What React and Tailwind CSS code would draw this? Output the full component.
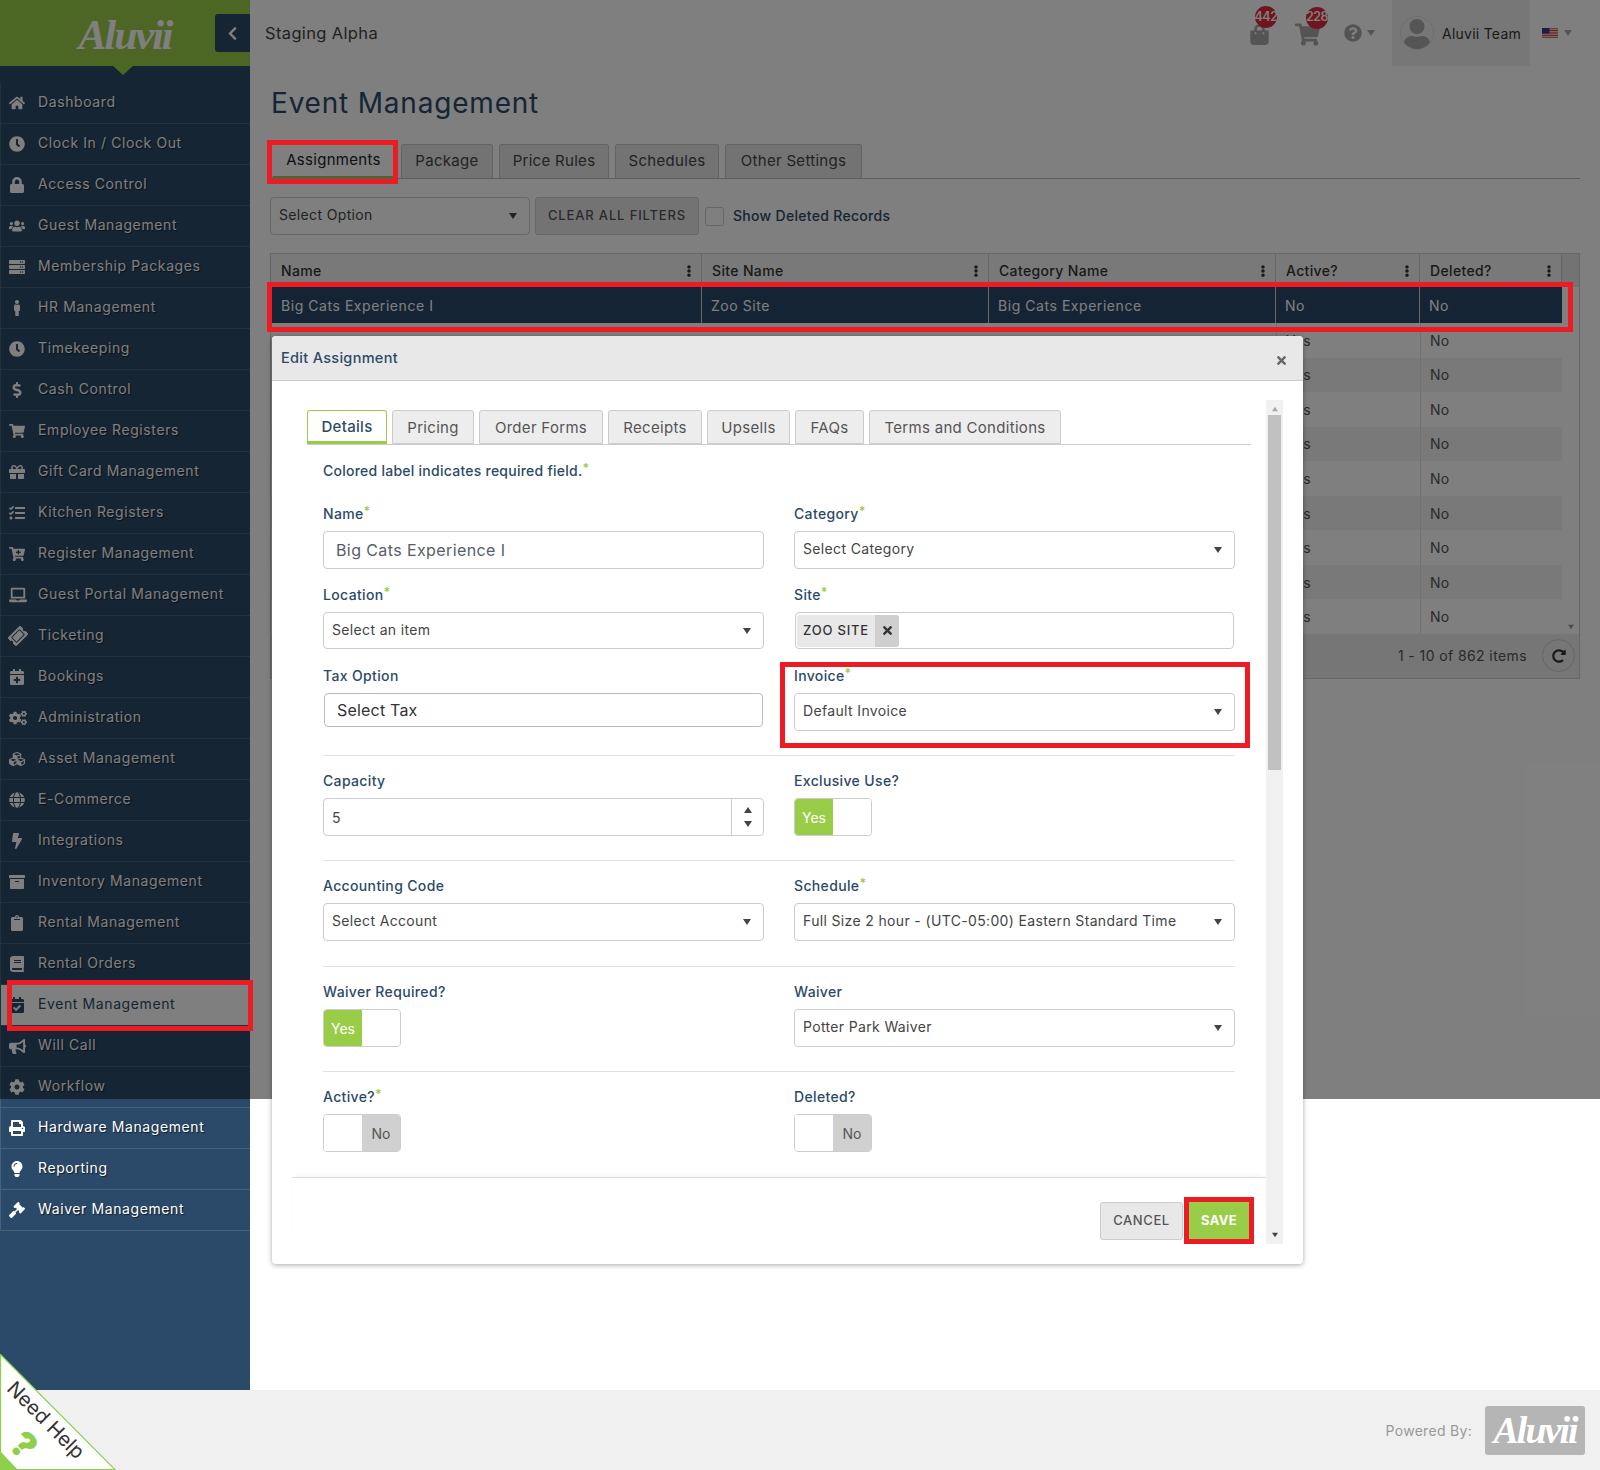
import React from "react";
import {
  FaHome, FaClock, FaLock, FaUsers, FaServer, FaMale, FaDollarSign, FaShoppingCart, FaGift, FaTasks,
  FaCartPlus, FaLaptop, FaTicketAlt, FaCalendarPlus, FaCogs, FaCubes, FaGlobe, FaBolt, FaArchive, FaClipboard,
  FaBook, FaCalendarCheck, FaBullhorn, FaCog, FaPrint, FaLightbulb, FaGavel, FaChevronLeft, FaShoppingBag,
  FaQuestionCircle, FaUser, FaTimes, FaEllipsisV, FaRedoAlt,
} from "react-icons/fa";

const nav = [
  [FaHome, "Dashboard"], [FaClock, "Clock In / Clock Out"], [FaLock, "Access Control"], [FaUsers, "Guest Management"],
  [FaServer, "Membership Packages"], [FaMale, "HR Management"], [FaClock, "Timekeeping"], [FaDollarSign, "Cash Control"],
  [FaShoppingCart, "Employee Registers"], [FaGift, "Gift Card Management"], [FaTasks, "Kitchen Registers"],
  [FaCartPlus, "Register Management"], [FaLaptop, "Guest Portal Management", 18], [FaTicketAlt, "Ticketing", 18, "-rotate-45"],
  [FaCalendarPlus, "Bookings"], [FaCogs, "Administration", 18], [FaCubes, "Asset Management"], [FaGlobe, "E-Commerce"],
  [FaBolt, "Integrations"], [FaArchive, "Inventory Management"], [FaClipboard, "Rental Management"], [FaBook, "Rental Orders"],
  [FaCalendarCheck, "Event Management"], [FaBullhorn, "Will Call", 17], [FaCog, "Workflow"], [FaPrint, "Hardware Management"],
  [FaLightbulb, "Reporting"], [FaGavel, "Waiver Management"],
];

function NavItem({ icon: Icon, label, size = 16, iconClass = "" }) {
  const active = label === "Event Management";
  return (
    <div className={`flex h-[41px] items-center border-b border-l border-[#46617c] pl-[8px] text-[14px] tracking-[0.6px] ${active ? "bg-white text-[#2c4a68]" : "text-white [text-shadow:1px_1px_1px_rgba(0,0,0,0.6)]"}`}>
      <span className="flex w-[29px] shrink-0 items-center"><Icon size={size} className={iconClass} /></span>
      <span className="-mt-[3px]">{label}</span>
    </div>
  );
}

const Caret = ({ className = "" }) => (
  <span className={`inline-block h-0 w-0 border-x-[4px] border-t-[6px] border-x-transparent border-t-[#444] ${className}`} />
);

function Flag() {
  return (
    <svg width="16" height="11" viewBox="0 0 16 11">
      <rect width="16" height="11" fill="#fff" />
      <path d="M0 .8h16M0 2.5h16M0 4.2h16M0 5.9h16M0 7.6h16M0 9.3h16" stroke="#c8352f" strokeWidth="0.9" />
      <rect width="7.5" height="5.6" fill="#3c3b8f" />
    </svg>
  );
}

function Badge({ n, className }) {
  return (
    <span className={`absolute flex h-[22px] w-[22px] items-center justify-center rounded-full bg-[#e0283c] text-[12.5px] font-semibold tracking-[-0.5px] text-white ${className}`}>{n}</span>
  );
}

function Label({ children, req }) {
  return (
    <div className="flex h-[34px] items-center pb-[1px] text-[14px] font-medium tracking-[0.35px] text-[#2c4a68]">
      {children}
      {req && <span className="relative -top-[3px] text-[12px] font-bold text-[#9acd47]">*</span>}
    </div>
  );
}

function Select({ value, className = "h-[37px]" }) {
  return (
    <div className={`flex items-center justify-between rounded-[4px] border border-[#ccc] bg-white pl-[8px] pr-[12px] text-[14px] tracking-[0.35px] text-[#444] ${className}`}>
      <span className="pb-[3px]">{value}</span>
      <Caret />
    </div>
  );
}

function Toggle({ on }) {
  return (
    <div className="flex h-[38px] w-[78px] overflow-hidden rounded-[4px] border border-[#ccc] text-[14px]">
      {on ? (
        <>
          <span className="flex w-[38px] items-center justify-center bg-[#9acd47] text-white">Yes</span>
          <span className="flex-1 bg-white" />
        </>
      ) : (
        <>
          <span className="w-[38px] bg-white" />
          <span className="flex flex-1 items-center justify-center bg-[#d0d0d0] text-[#555]">No</span>
        </>
      )}
    </div>
  );
}

const Divider = ({ className = "" }) => <div className={`border-t border-[#e2e2e2] ${className}`} />;

const Red = ({ className }) => <div className={`absolute border-[5px] border-[#ed1c24] ${className}`} />;

function MainTab({ children, active, className }) {
  return (
    <div className={`flex h-[34px] items-center justify-center rounded-t-[3px] border border-b-0 text-[15px] tracking-[0.3px] ${active ? "border-transparent border-b-[2px] border-b-[#99cc46] text-[#222]" : "border-[#c6c6c6] bg-[#e8e7e8] text-[#444]"} ${className}`}>
      {children}
    </div>
  );
}

function ModalTab({ children, active, className }) {
  return (
    <div className={`flex h-[34px] items-center justify-center rounded-t-[3px] border pt-[2px] text-[15px] tracking-[0.3px] ${active ? "border-[#9acd47] border-b-[3px] bg-white font-medium text-[#2c4a68]" : "border-[#ccc] bg-[#eeeded] text-[#555]"} ${className}`}>
      {children}
    </div>
  );
}

const HeadCell = ({ children }) => (
  <div className="flex items-center justify-between border-r border-[#c8c8c8] pl-[10px] pr-[6px] text-[14px] font-medium tracking-[0.35px] text-[#333]">
    <span>{children}</span>
    <FaEllipsisV size={12} className="text-[#333]" />
  </div>
);

const SelCell = ({ children, last }) => (
  <div className={`flex items-center bg-[#294869] pl-[9px] text-[14px] tracking-[0.55px] text-white ${last ? "" : "border-r border-[#d0d0d0]"}`}>{children}</div>
);

function BgRow({ stripe, last }) {
  return (
    <div className={`grid h-[34.56px] grid-cols-[431px_287px_287px_144px_142px_1fr] text-[14px] tracking-[0.3px] text-[#555] ${stripe ? "[&>div:not(:last-child)]:bg-[#f2f2f2]" : ""}`}>
      <div /><div /><div />
      <div className="flex items-center border-l border-[#e2e2e2] pl-[9px]">Yes</div>
      <div className="flex items-center border-l border-[#e2e2e2] pl-[9px]">No</div>
      <div className="flex items-end justify-center pb-[4px]">{last && <Caret className="scale-75 border-t-[#999]" />}</div>
    </div>
  );
}

export default function App() {
  return (
    <div className="relative h-[1470px] w-[1600px] overflow-hidden bg-white font-[Inter,sans-serif] text-[#333]">
      <div className="flex h-[1390px]">
        <aside className="w-[250px] shrink-0 bg-[#2b4a69]">
          <div className="relative flex h-[66px] items-center bg-[#99cc46]">
            <div className="ml-[70px] flex h-[53px] w-[110px] items-center justify-center bg-white/[0.03] pt-[4px] font-['Liberation_Serif',serif] text-[42px] font-bold italic leading-none tracking-[-2px] text-white">Aluvii</div>
            <div className="absolute right-0 top-[14px] flex h-[38px] w-[35px] items-center justify-center rounded-l-[3px] bg-[#2b4a69] text-white"><FaChevronLeft size={15} /></div>
            <span className="absolute left-[113px] top-full h-0 w-0 border-x-[10px] border-t-[9px] border-x-transparent border-t-[#99cc46]" />
          </div>
          <nav className="pt-[17px]">
            {nav.map(([icon, label, size, iconClass]) => <NavItem key={label} icon={icon} label={label} size={size} iconClass={iconClass} />)}
          </nav>
        </aside>

        <main className="w-[1350px]">
          <header className="flex h-[66px] items-center justify-between text-[#444]">
            <div className="pl-[15px] text-[16.5px] tracking-[0.35px]">Staging Alpha</div>
            <div className="flex h-full items-center">
              <div className="relative mr-[25px] text-[#a8a8a8]"><FaShoppingBag size={21} className="mt-[3px]" /><Badge n="442" className="-right-[7px] -top-[15px]" /></div>
              <div className="relative mr-[24px] text-[#a8a8a8]"><FaShoppingCart size={25} className="mt-[2px]" /><Badge n="228" className="-right-[8px] -top-[13px]" /></div>
              <div className="mr-[17px] flex items-center gap-[5px] text-[#a8a8a8]"><FaQuestionCircle size={18} /><Caret className="border-t-[#aaa]" /></div>
              <div className="flex h-full w-[138px] items-center bg-[#efefef] pl-[8px] text-[14px] tracking-[0.25px] text-[#333]">
                <span className="mr-[8px] flex h-[34px] w-[34px] items-end justify-center overflow-hidden rounded-full border border-[#ddd] text-[#aaa]"><FaUser size={30} /></span>
                Aluvii Team
              </div>
              <div className="ml-[12px] mr-[28px] flex items-center gap-[6px]"><Flag /><Caret className="border-t-[#aaa]" /></div>
            </div>
          </header>

          <div className="px-[20px]">
            <h1 className="flex h-[78px] items-center pb-[5px] pl-px text-[28px] font-normal tracking-[0.8px] text-[#2c4a68]">Event Management</h1>
            <div className="flex gap-[6px] border-b border-[#bbb] pl-[2px]">
              <MainTab active className="w-[123px]">Assignments</MainTab>
              <MainTab className="w-[92px]">Package</MainTab>
              <MainTab className="w-[110px]">Price Rules</MainTab>
              <MainTab className="w-[104px]">Schedules</MainTab>
              <MainTab className="w-[137px]">Other Settings</MainTab>
            </div>

            <div className="mt-[18px] flex h-[38px] items-center">
              <Select value="Select Option" className="h-[38px] w-[260px]" />
              <div className="ml-[5px] flex h-[38px] w-[164px] items-center justify-center rounded-[3px] border border-[#ccc] bg-[#e8e7e8] text-[13px] font-medium tracking-[0.85px] text-[#555]">CLEAR ALL FILTERS</div>
              <div className="ml-[6px] h-[19px] w-[19px] rounded-[3px] border border-[#ccc] bg-white" />
              <div className="ml-[9px] pb-[2px] text-[14px] font-medium tracking-[0.3px] text-[#2c4a68]">Show Deleted Records</div>
            </div>

            <div className="mt-[18px] border border-[#ccc]">
              <div className="grid h-[33px] grid-cols-[431px_287px_287px_144px_142px_1fr] bg-[#f2f2f2]">
                <HeadCell>Name</HeadCell>
                <HeadCell>Site Name</HeadCell>
                <HeadCell>Category Name</HeadCell>
                <HeadCell>Active?</HeadCell>
                <HeadCell>Deleted?</HeadCell>
                <div className="bg-[#e6e6e6]" />
              </div>
              <div className="grid h-[36px] grid-cols-[431px_287px_287px_144px_142px_1fr]">
                <SelCell><span className="ml-px">Big Cats Experience I</span></SelCell>
                <SelCell>Zoo Site</SelCell>
                <SelCell>Big Cats Experience</SelCell>
                <SelCell>No</SelCell>
                <SelCell last>No</SelCell>
                <div />
              </div>
              {[false, true, false, true, false, true, false, true, false].map((s, i) => <BgRow key={i} stripe={s} last={i === 8} />)}
              <div className="flex h-[44px] items-center justify-end gap-[15px] bg-[#ececec] pr-[4px] text-[14px] tracking-[0.4px] text-[#555]">
                <span>1 - 10 of 862 items</span>
                <span className="flex h-[33px] w-[33px] items-center justify-center rounded-full border border-[#ccc] text-[#333]"><FaRedoAlt size={14} /></span>
              </div>
            </div>
          </div>
        </main>
      </div>

      <footer className="flex h-[80px] items-center justify-end bg-[#f0f0f0] pr-[15px] text-[14px] tracking-[0.3px] text-[#999]">
        <span className="mr-[13px]">Powered By:</span>
        <div className="flex h-[49px] w-[100px] items-center justify-center rounded-[3px] bg-[#b5b5b5] font-['Liberation_Serif',serif] text-[38px] font-bold italic tracking-[-2px] text-white">Aluvii</div>
      </footer>

      {/* page overlay */}
      <div className="absolute inset-x-0 top-0 h-[1099px] bg-black/50" />

      {/* need help corner */}
      <svg className="absolute bottom-0 left-0" width="116" height="116" viewBox="0 0 116 116">
        <polygon points="0.5,0.5 0.5,115.5 115,115.5" fill="#fff" stroke="#8ed04a" strokeWidth="1.2" />
        <polygon points="0,97 0,116 18,116" fill="#8ed04a" />
      </svg>
      <div className="absolute left-[-9px] top-[1410px] w-[110px] rotate-45 text-center text-[20px] leading-none text-[#333]">Need Help</div>
      <div className="absolute left-[13px] top-[1427px] rotate-45 text-[36px] font-black leading-none text-[#8ed04a]">?</div>

      {/* modal */}
      <div className="absolute left-[272px] top-[336px] h-[928px] w-[1031px] rounded-[4px] bg-white shadow-[0_1px_5px_rgba(0,0,0,0.35)]">
        <div className="flex h-[45px] items-center justify-between rounded-t-[4px] border-b border-[#ccc] bg-[#e9e8e9] pl-[9px] pr-[15px]">
          <span className="text-[14.5px] font-medium tracking-[0.3px] text-[#2c4a68]">Edit Assignment</span>
          <FaTimes size={13} className="mt-[5px] text-[#666]" />
        </div>
        <div className="mt-[19px] flex h-[844px]">
          <div className="w-[994px]">
            <div className="pl-[35px] pr-[15px] pt-[10px]">
              <div className="flex gap-[5px] border-b border-[#ccc]">
                <ModalTab active className="w-[80px]">Details</ModalTab>
                <ModalTab className="w-[82px]">Pricing</ModalTab>
                <ModalTab className="w-[124px]">Order Forms</ModalTab>
                <ModalTab className="w-[94px]">Receipts</ModalTab>
                <ModalTab className="w-[83px]">Upsells</ModalTab>
                <ModalTab className="w-[69px]">FAQs</ModalTab>
                <ModalTab className="w-[192px]">Terms and Conditions</ModalTab>
              </div>
            </div>
            <div className="ml-[51px] w-[912px]">
              <div className="flex h-[52px] items-center pb-[1px] text-[14px] font-medium tracking-[0.25px] text-[#2c4a68]">Colored label indicates required field.<span className="relative -top-[3px] text-[12px] font-bold text-[#9acd47]">*</span></div>
              <div className="grid grid-cols-2 gap-x-[30px]">
                <div>
                  <Label req>Name</Label>
                  <div className="flex h-[38px] items-center rounded-[4px] border border-[#ccc] pl-[12px] text-[16px] tracking-[0.4px] text-[#555e6a]">Big Cats Experience I</div>
                  <div className="mt-[9px]"><Label req>Location</Label></div>
                  <Select value="Select an item" />
                  <div className="mt-[10px]"><Label>Tax Option</Label></div>
                  <div className="mx-px flex h-[34px] items-center rounded-[4px] border border-[#bbb] pl-[12px] text-[16px] tracking-[0.2px] text-[#333]">Select Tax</div>
                </div>
                <div>
                  <Label req>Category</Label>
                  <Select value="Select Category" className="h-[38px]" />
                  <div className="mt-[9px]"><Label req>Site</Label></div>
                  <div className="mx-px flex h-[37px] items-center rounded-[4px] border border-[#ccc] pl-[1px]">
                    <div className="flex h-[32px] w-[102px] items-center overflow-hidden rounded-[3px] bg-[#e9e8e9] text-[13px] font-medium tracking-[0.8px] text-[#333]">
                      <span className="flex-1 pl-[6px]">ZOO SITE</span>
                      <span className="flex h-full w-[24px] items-center justify-center bg-[#cfcfcf]"><FaTimes size={13} /></span>
                    </div>
                  </div>
                  <div className="mt-[10px]"><Label req>Invoice</Label></div>
                  <Select value="Default Invoice" className="h-[38px]" />
                </div>
              </div>
              <Divider className="mt-[24px]" />
              <div className="mt-[8px] grid grid-cols-2 gap-x-[30px]">
                <div>
                  <Label>Capacity</Label>
                  <div className="flex h-[38px] items-center rounded-[4px] border border-[#ccc] pl-[8px] text-[14px] text-[#444]">
                    <span className="flex-1">5</span>
                    <span className="flex h-full w-[32px] flex-col items-center justify-center gap-[8px] border-l border-[#ccc]">
                      <Caret className="rotate-180" />
                      <Caret />
                    </span>
                  </div>
                </div>
                <div>
                  <Label>Exclusive Use?</Label>
                  <Toggle on />
                </div>
              </div>
              <Divider className="mt-[24px]" />
              <div className="mt-[8px] grid grid-cols-2 gap-x-[30px]">
                <div><Label>Accounting Code</Label><Select value="Select Account" className="h-[38px]" /></div>
                <div><Label req>Schedule</Label><Select value="Full Size 2 hour - (UTC-05:00) Eastern Standard Time" className="h-[38px]" /></div>
              </div>
              <Divider className="mt-[25px]" />
              <div className="mt-[8px] grid grid-cols-2 gap-x-[30px]">
                <div><Label>Waiver Required?</Label><Toggle on /></div>
                <div><Label>Waiver</Label><Select value="Potter Park Waiver" className="h-[38px]" /></div>
              </div>
              <Divider className="mt-[24px]" />
              <div className="mt-[8px] grid grid-cols-2 gap-x-[30px]">
                <div><Label req>Active?</Label><Toggle /></div>
                <div><Label>Deleted?</Label><Toggle /></div>
              </div>
            </div>
            <div className="ml-[20px] mt-[25px] flex justify-end gap-[6px] border-t border-[#ddd] pr-[17px] pt-[24px] shadow-[0_-3px_6px_-3px_rgba(0,0,0,0.08)]">
              <div className="flex h-[38px] w-[83px] items-center justify-center rounded-[3px] border border-[#ccc] bg-[#e9e8e9] text-[13px] font-medium tracking-[0.6px] text-[#555]">CANCEL</div>
              <div className="flex h-[38px] w-[60px] items-center justify-center bg-[#9acd47] text-[13px] font-bold tracking-[0.3px] text-white">SAVE</div>
            </div>
          </div>
          <div className="flex w-[17px] flex-col items-center justify-between bg-[#f1f1f1] py-[6px]">
            <Caret className="rotate-180 scale-75 border-t-[#aaa]" />
            <div className="absolute top-[79px] h-[355px] w-[13px] bg-[#c1c1c1]" />
            <Caret className="scale-75" />
          </div>
        </div>
      </div>

      {/* annotations */}
      <Red className="left-[267px] top-[140px] h-[44px] w-[131px]" />
      <Red className="left-[267px] top-[282px] h-[50px] w-[1306px]" />
      <Red className="left-[7px] top-[980px] h-[51px] w-[246px]" />
      <Red className="left-[780px] top-[662px] h-[86px] w-[470px]" />
      <Red className="left-[1184px] top-[1197px] h-[47px] w-[70px]" />
    </div>
  );
}
